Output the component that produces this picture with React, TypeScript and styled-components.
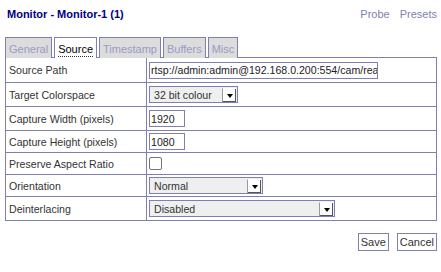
import { createGlobalStyle } from 'styled-components'
import styled from 'styled-components'

const line = '#7f7fb2'

const GlobalStyle = createGlobalStyle`
  body {
    margin: 0;
    background: #ffffff;
    font-family: 'Liberation Sans', Arial, sans-serif;
    font-size: 11px;
    color: #333333;
  }
`

const Page = styled.div`
  width: 441px;
  padding: 0 4px 0 5px;
  box-sizing: border-box;
`

const Header = styled.div`
  display: flex;
  align-items: center;
  justify-content: space-between;
  height: 27px;
  padding: 0 0 0 2px;
`

const Title = styled.h2`
  margin: 0;
  font-size: 11px;
  font-weight: bold;
  color: #000080;
`

const Links = styled.div`
  display: flex;
  gap: 10px;
  font-size: 11px;
  color: ${line};
`

const Tabs = styled.div`
  display: flex;
  gap: 2px;
  margin-top: 10px;
  height: 21px;
  align-items: stretch;
`

const Tab = styled.div<{ active?: boolean }>`
  display: flex;
  align-items: center;
  padding: 0 3px;
  border: 1px solid ${line};
  border-bottom: none;
  background: ${({ active }) => (active ? '#ffffff' : '#dcdcdc')};
  color: ${({ active }) => (active ? '#000000' : '#9a9ac4')};
  font-size: 11px;
`

const TabLabel = styled.span<{ active?: boolean }>`
  border-bottom: 1px dotted ${({ active }) => (active ? '#333333' : 'transparent')};
  line-height: 14px;
  margin-top: 2px;
`

const Table = styled.table`
  width: 432px;
  margin-top: -1px;
  border-collapse: collapse;
  border: 1px solid ${line};
`

const Row = styled.tr<{ h: number }>`
  height: ${({ h }) => h}px;
`

const Label = styled.td`
  width: 134px;
  padding: 0 3px;
  border: 1px solid ${line};
  font-size: 10.6px;
  color: #333333;
`

const Value = styled.td`
  padding: 0 2px;
  border: 1px solid ${line};
`

const TextInput = styled.div<{ w: number }>`
  width: ${({ w }) => w}px;
  height: 17px;
  box-sizing: border-box;
  border: 1px solid ${line};
  padding: 0 1px;
  display: flex;
  align-items: center;
  font-size: 10.6px;
  color: #222222;
  white-space: nowrap;
  overflow: hidden;
`

const Select = styled.div<{ w: number }>`
  width: ${({ w }) => w}px;
  height: 17px;
  box-sizing: border-box;
  border: 1px solid ${line};
  background: #efefef;
  display: flex;
  align-items: center;
  justify-content: space-between;
  font-size: 10.6px;
  color: #333333;
  padding-left: 4px;
`

const Arrow = styled.span`
  width: 13px;
  height: 13px;
  margin-right: 1px;
  background: #ffffff;
  border-left: 1px solid #9a9a9a;
  border-top: 1px solid #ffffff;
  box-shadow: inset -1px -1px 0 #555555;
  display: flex;
  align-items: center;
  justify-content: center;
  &::after {
    content: '';
    border-left: 3.5px solid transparent;
    border-right: 3.5px solid transparent;
    border-top: 4px solid #000000;
    margin-top: 2px;
  }
`

const Check = styled.span`
  display: block;
  width: 13px;
  height: 13px;
  box-sizing: border-box;
  border: 1px solid #767676;
  border-radius: 2px;
  background: #ffffff;
`

const Buttons = styled.div`
  display: flex;
  justify-content: flex-end;
  gap: 8px;
  margin-top: 12px;
`

const Button = styled.button`
  height: 18px;
  padding: 0 2px;
  border: 1px solid ${line};
  background: #ffffff;
  font-family: 'Liberation Sans', Arial, sans-serif;
  font-size: 11px;
  color: #333333;
`

const tabs = ['General', 'Source', 'Timestamp', 'Buffers', 'Misc']

export default function App() {
  return (
    <Page>
      <GlobalStyle />
      <Header>
        <Title>Monitor - Monitor-1 (1)</Title>
        <Links>
          <span>Probe</span>
          <span>Presets</span>
        </Links>
      </Header>
      <Tabs>
        {tabs.map((t) => (
          <Tab key={t} active={t === 'Source'}>
            <TabLabel active={t === 'Source'}>{t}</TabLabel>
          </Tab>
        ))}
      </Tabs>
      <Table>
        <tbody>
          <Row h={25}>
            <Label>Source Path</Label>
            <Value>
              <TextInput w={229}>rtsp://admin:admin@192.168.0.200:554/cam/rea</TextInput>
            </Value>
          </Row>
          <Row h={24}>
            <Label>Target Colorspace</Label>
            <Value>
              <Select w={89}>
                32 bit colour
                <Arrow />
              </Select>
            </Value>
          </Row>
          <Row h={24}>
            <Label>Capture Width (pixels)</Label>
            <Value>
              <TextInput w={36}>1920</TextInput>
            </Value>
          </Row>
          <Row h={22}>
            <Label>Capture Height (pixels)</Label>
            <Value>
              <TextInput w={36}>1080</TextInput>
            </Value>
          </Row>
          <Row h={22}>
            <Label>Preserve Aspect Ratio</Label>
            <Value>
              <Check />
            </Value>
          </Row>
          <Row h={22}>
            <Label>Orientation</Label>
            <Value>
              <Select w={114}>
                Normal
                <Arrow />
              </Select>
            </Value>
          </Row>
          <Row h={24}>
            <Label>Deinterlacing</Label>
            <Value>
              <Select w={186}>
                Disabled
                <Arrow />
              </Select>
            </Value>
          </Row>
        </tbody>
      </Table>
      <Buttons>
        <Button>Save</Button>
        <Button>Cancel</Button>
      </Buttons>
    </Page>
  )
}
